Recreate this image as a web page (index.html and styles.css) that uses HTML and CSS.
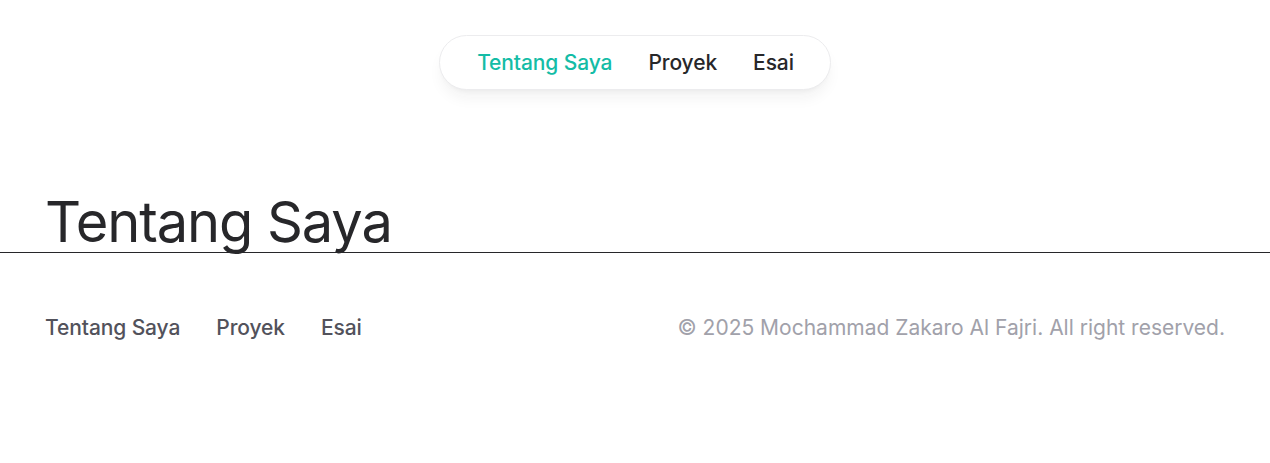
FILE: index.html
```html
<!DOCTYPE html>
<html lang="id">
<head>
<meta charset="utf-8">
<title>Tentang Saya</title>
<link rel="stylesheet" href="styles.css">
</head>
<body>
<header class="top">
  <nav class="pill">
    <a class="pill-link active" href="#">Tentang Saya</a>
    <a class="pill-link" href="#">Proyek</a>
    <a class="pill-link" href="#">Esai</a>
  </nav>
</header>
<main class="main">
  <h1 class="title">Tentang Saya</h1>
</main>
<footer class="footer">
  <div class="footer-links">
    <a href="#">Tentang Saya</a>
    <a href="#">Proyek</a>
    <a href="#">Esai</a>
  </div>
  <p class="copy">© 2025 Mochammad Zakaro Al Fajri. All right reserved.</p>
</footer>
</body>
</html>
```
FILE: styles.css
```css
* { box-sizing: border-box; }
html, body { margin: 0; padding: 0; background: #fff; }
body {
  font-family: Inter, "Noto Sans", sans-serif;
  color: #27272a;
}
a { text-decoration: none; color: inherit; }

.top {
  display: flex;
  justify-content: center;
  padding-top: 35px;
}
.pill {
  display: flex;
  align-items: center;
  height: 55px;
  padding: 0 18px 0 19px;
  border-radius: 9999px;
  background: #fff;
  border: 1px solid #ececee;
  box-shadow: 0 10px 15px -3px rgba(39,39,42,0.06), 0 4px 6px -4px rgba(39,39,42,0.06);
}
.pill-link {
  font-size: 21px;
  font-weight: 500;
  padding: 0 18px;
  letter-spacing: -0.1px;
  color: #27272a;
}
.pill-link.active { color: #14bca6; }

.main {
  margin-top: 104px;
  border-bottom: 1px solid #27272a;
  padding: 0 44px 2px 45px;
}
.title {
  margin: 0;
  font-size: 56px;
  font-weight: 400;
  line-height: 1;
  letter-spacing: -1.1px;
  color: #27272a;
}

.footer {
  display: flex;
  justify-content: space-between;
  align-items: center;
  padding: 62px 45px 0;
}
.footer-links {
  display: flex;
  gap: 36px;
  font-size: 21px;
  font-weight: 500;
  letter-spacing: -0.1px;
  color: #52525b;
}
.copy {
  margin: 0;
  font-size: 21px;
  color: #a1a1aa;
}
```
